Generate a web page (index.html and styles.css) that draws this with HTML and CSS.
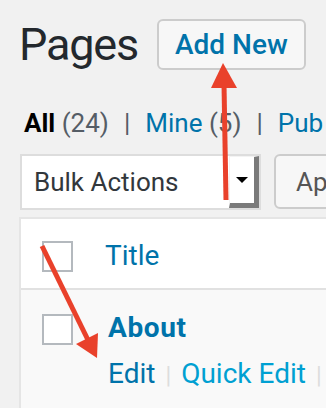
FILE: index.html
```html
<!doctype html>
<html>
<head>
  <meta charset="utf-8">
  <title>Pages</title>
  <link rel="stylesheet" href="styles.css">
</head>
<body>
  <div class="wrap">
    <div class="page-head">
      <h1 class="page-title">Pages</h1>
      <a class="page-title-action" href="#">Add New</a>
    </div>

    <ul class="subsubsub">
      <li class="current">All <span class="count">(24)</span></li>
      <li class="sep">|</li>
      <li><a href="#">Mine</a> <span class="count">(5)</span></li>
      <li class="sep">|</li>
      <li><a href="#">Pub</a></li>
    </ul>

    <div class="tablenav">
      <div class="bulk-select">
        <span class="bulk-label">Bulk Actions</span>
        <span class="bulk-arrow"><span class="caret"></span></span>
      </div>
      <a class="button apply" href="#">Ap</a>
    </div>

    <table class="list-table">
      <thead>
        <tr>
          <td class="check-column"><span class="checkbox"></span></td>
          <th class="title-column"><a href="#">Title</a></th>
        </tr>
      </thead>
      <tbody>
        <tr>
          <td class="check-column"><span class="checkbox"></span></td>
          <td class="title-column">
            <a class="row-title" href="#">About</a>
            <div class="row-actions">
              <a class="edit" href="#">Edit</a><span class="sep">|</span><a class="quick" href="#">Quick Edit</a><span class="sep">|</span><a class="trash" href="#">T</a>
            </div>
          </td>
        </tr>
      </tbody>
    </table>
  </div>

  <svg class="arrows" width="326" height="408" viewBox="0 0 326 408">
    <line x1="226" y1="200" x2="224" y2="84" stroke="#e9412b" stroke-width="5"/>
    <polygon points="223,63 211,88 237,88" fill="#e9412b"/>
    <line x1="42" y1="246" x2="88" y2="340" stroke="#e9412b" stroke-width="5"/>
    <polygon points="97,358 76,344 98,333" fill="#e9412b"/>
  </svg>
</body>
</html>
```

FILE: styles.css
```css
html, body {
  margin: 0;
  height: 100%;
}
body {
  position: relative;
  overflow: hidden;
  background-color: #f1f1f1;
  color: #32373c;
  font-family: Roboto, "Liberation Sans", sans-serif;
}
a {
  color: #0073aa;
  text-decoration: none;
}
.wrap {
  padding-left: 20px;
  width: 306px;
}
.page-head {
  display: flex;
  align-items: center;
  padding-top: 19px;
}
.page-title {
  margin: 0 19px 0 -1px;
  font-size: 45px;
  font-weight: 400;
  letter-spacing: -1.2px;
  line-height: 51px;
  color: #23282d;
}
.page-title-action {
  display: inline-flex;
  align-items: center;
  box-sizing: border-box;
  height: 51px;
  padding: 0 16px;
  border: 2px solid #ccc;
  border-radius: 6px;
  background-color: #f7f7f7;
  font-size: 28px;
  font-weight: 500;
  white-space: nowrap;
}
.subsubsub {
  display: flex;
  gap: 15px;
  margin: 38px 0 0;
  padding: 0 0 0 4px;
  list-style: none;
  font-size: 26px;
  line-height: 30px;
  color: #555d66;
  white-space: nowrap;
}
.subsubsub .current {
  color: #000;
  font-weight: 700;
}
.subsubsub .current .count {
  font-weight: 400;
  color: #555d66;
}
.subsubsub .sep {
  color: #555d66;
}
.tablenav {
  display: flex;
  gap: 13px;
  margin-top: 16px;
}
.bulk-select {
  display: flex;
  flex: none;
  box-sizing: border-box;
  width: 241px;
  height: 56px;
  border: 2px solid #ddd;
  background-color: #fff;
}
.bulk-label {
  flex: 1;
  padding-left: 12px;
  font-size: 26px;
  line-height: 52px;
  color: #32373c;
}
.bulk-arrow {
  display: flex;
  align-items: center;
  justify-content: center;
  box-sizing: border-box;
  width: 30px;
  border-style: solid;
  border-width: 1px 5px 5px 1px;
  border-color: #f3f3f3 #7a7a7a #7a7a7a #f3f3f3;
  background-color: #fff;
}
.caret {
  width: 0;
  height: 0;
  border-left: 6px solid transparent;
  border-right: 6px solid transparent;
  border-top: 6px solid #000;
}
.button {
  display: inline-flex;
  flex: none;
  align-items: center;
  box-sizing: border-box;
  width: 80px;
  height: 55px;
  padding: 0 20px;
  border: 2px solid #ccc;
  border-radius: 6px;
  background-color: #f7f7f7;
  color: #555;
  font-size: 26px;
}
.list-table {
  margin-top: 7px;
  margin-left: -1px;
  width: 320px;
  table-layout: fixed;
  border: 2px solid #e5e5e5;
  border-right: 0;
  border-spacing: 0;
  border-collapse: separate;
}
.list-table td,
.list-table th {
  padding: 0;
  text-align: left;
  vertical-align: top;
}
.list-table thead td,
.list-table thead th {
  background-color: #fff;
  border-bottom: 2px solid #e1e1e1;
}
thead .check-column {
  height: 69px;
}
.list-table tbody td {
  height: 120px;
  background-color: #f9f9f9;
}
.check-column {
  width: 63px;
  padding-left: 21px !important;
}
.checkbox {
  display: block;
  box-sizing: border-box;
  width: 31px;
  height: 31px;
  margin-top: 22px;
  border: 2px solid #b4b9be;
  background-color: #fff;
}
tbody .checkbox {
  margin-top: 24px;
}
.title-column a {
  font-weight: 400;
  font-size: 28px;
}
thead .title-column {
  padding-top: 20px !important;
  padding-left: 0 !important;
  line-height: 34px;
}
tbody .title-column {
  padding-top: 22px !important;
  padding-left: 3px !important;
}
.row-title {
  display: block;
  font-size: 28px !important;
  font-weight: 700 !important;
  letter-spacing: 0.6px;
  line-height: 32px;
}
.row-actions {
  margin-top: 15px;
  font-size: 23.5px;
  line-height: 30px;
  white-space: nowrap;
}
.row-actions .edit {
  color: #0073aa;
}
.row-actions .quick {
  color: #00a0d2;
}
.row-actions .trash {
  color: #a00;
}
.row-actions .sep {
  margin: 0 10px;
  color: #ddd;
}
.arrows {
  position: absolute;
  left: 0;
  top: 0;
}
```
